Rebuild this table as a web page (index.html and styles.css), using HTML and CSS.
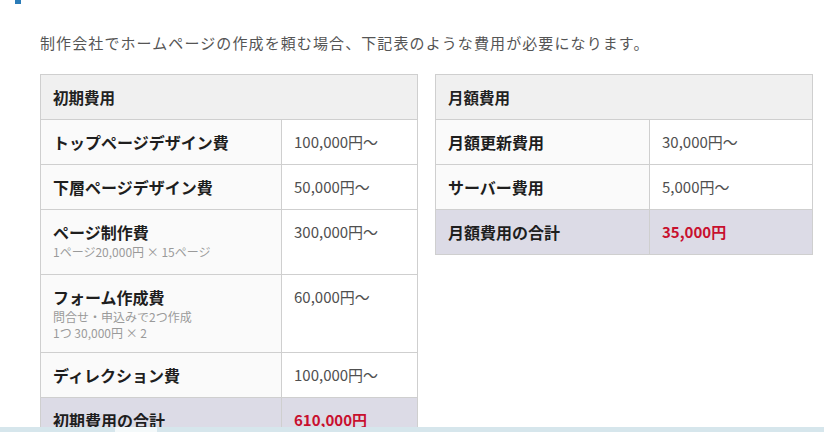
FILE: index.html
```html
<!DOCTYPE html>
<html lang="ja">
<head>
<meta charset="utf-8">
<link rel="stylesheet" href="styles.css">
</head>
<body>
<div class="mark"></div>
<main class="content">
  <p class="intro">制作会社でホームページの作成を頼む場合、下記表のような費用が必要になります。</p>
  <div class="tables">
    <table class="cost cost-left">
      <thead>
        <tr><th colspan="2">初期費用</th></tr>
      </thead>
      <tbody>
        <tr><td class="label">トップページデザイン費</td><td class="value">100,000円〜</td></tr>
        <tr><td class="label">下層ページデザイン費</td><td class="value">50,000円〜</td></tr>
        <tr><td class="label">ページ制作費<span class="sub sub-one">1ページ20,000円 × 15ページ</span></td><td class="value">300,000円〜</td></tr>
        <tr><td class="label">フォーム作成費<span class="sub">問合せ・申込みで2つ作成<br>1つ 30,000円 × 2</span></td><td class="value">60,000円〜</td></tr>
        <tr><td class="label">ディレクション費</td><td class="value">100,000円〜</td></tr>
        <tr class="total"><td class="label">初期費用の合計</td><td class="value">610,000円</td></tr>
      </tbody>
    </table>
    <table class="cost cost-right">
      <thead>
        <tr><th colspan="2">月額費用</th></tr>
      </thead>
      <tbody>
        <tr><td class="label">月額更新費用</td><td class="value">30,000円〜</td></tr>
        <tr><td class="label">サーバー費用</td><td class="value">5,000円〜</td></tr>
        <tr class="total"><td class="label">月額費用の合計</td><td class="value">35,000円</td></tr>
      </tbody>
    </table>
  </div>
</main>
<div class="bottom-bar"><span class="gap"></span></div>
</body>
</html>
```

FILE: styles.css
```css
html, body {
  margin: 0;
  padding: 0;
  background: #ffffff;
  overflow: hidden;
}
body {
  font-family: "Noto Sans CJK JP", "Noto Sans", sans-serif;
  color: #333333;
  height: 432px;
}
.mark {
  width: 6px;
  height: 4px;
  margin-left: 15px;
  background: #2b7cb8;
}
.content {
  padding: 27px 0 0 40px;
}
.intro {
  margin: 0;
  font-size: 15px;
  letter-spacing: 1.1px;
  line-height: 24px;
  color: #555555;
}
.tables {
  display: flex;
  align-items: flex-start;
  gap: 17px;
  margin-top: 19px;
}
.cost {
  border-collapse: collapse;
  width: 378px;
  border: 1px solid #cfcfcf;
}
.cost th {
  background: #f0f0f0;
  text-align: left;
  font-size: 15.5px;
  font-weight: bold;
  color: #222222;
  line-height: 24px;
  padding: 10px 12px;
  border: 1px solid #cfcfcf;
}
.cost td {
  border: 1px solid #cfcfcf;
  padding: 10px 12px;
  line-height: 24px;
  vertical-align: top;
}
.cost .label {
  background: #fafafa;
  font-size: 16px;
  font-weight: bold;
  color: #1e1e1e;
}
.cost .value {
  background: #ffffff;
  font-size: 15px;
  color: #505050;
}
.cost-left .label { width: 216px; }
.cost-right .label { width: 189px; }
.sub {
  display: block;
  font-size: 12px;
  font-weight: normal;
  line-height: 16px;
  color: #9a9a9a;
  margin-bottom: 1px;
}
.sub-one {
  margin-bottom: 4px;
}
.cost .total .label,
.cost .total .value {
  background: #dcdbe6;
}
.cost .total .value {
  color: #c8102e;
  font-weight: bold;
}
.bottom-bar {
  position: fixed;
  left: 0;
  right: 0;
  bottom: 0;
  height: 5px;
  background: #d6e6ec;
}
.bottom-bar .gap {
  display: block;
  margin-left: 115px;
  width: 42px;
  height: 5px;
  background: #f4f9fa;
}
```
